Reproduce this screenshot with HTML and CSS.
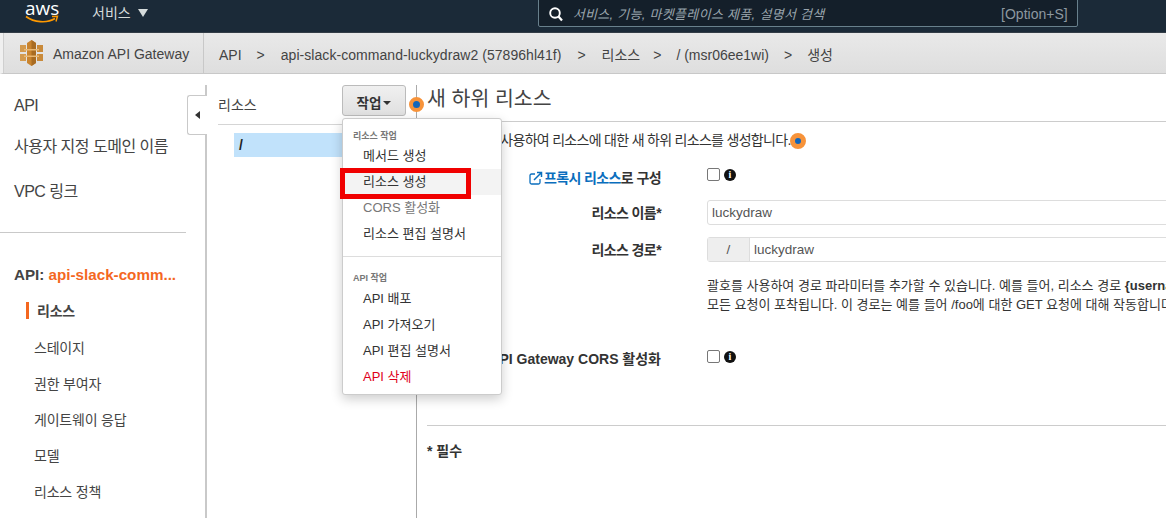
FILE: index.html
```html
<!DOCTYPE html>
<html lang="ko">
<head>
  <meta charset="UTF-8" />
  <title>Amazon API Gateway</title>
  <link rel="stylesheet" href="styles.css">
</head>
<body>

  <div class="topnav">
    <div class="aws-logo">
      <span class="aws-word">aws</span>
      <svg class="aws-smile" width="34" height="10" viewBox="0 0 34 10">
        <path d="M1 1.5C9 7.5 22 8.5 30 3.5" fill="none" stroke="#f90" stroke-width="1.6"/>
        <path d="M27 1.5L32.5 1.2 31 6.5" fill="none" stroke="#f90" stroke-width="1.4"/>
      </svg>
    </div>
    <div class="services">서비스 <span class="services-caret"></span></div>
    <div class="search">
      <svg class="search-icon" width="16" height="16" viewBox="0 0 16 16">
        <circle cx="7" cy="7" r="4.8" fill="none" stroke="#fff" stroke-width="1.9"/>
        <path d="M10.5 10.5L14 14.5" stroke="#fff" stroke-width="2.2"/>
      </svg>
      <span class="search-text">서비스, 기능, 마켓플레이스 제품, 설명서 검색</span>
      <span class="search-key">[Option+S]</span>
    </div>
  </div>

  <div class="subnav">
    <div class="brand">
      <svg width="23" height="26" viewBox="0 0 23 26">
        <rect x="0" y="5" width="6" height="7" fill="#d39a4e"/>
        <rect x="0" y="14" width="6" height="7" fill="#d39a4e"/>
        <rect x="17" y="5" width="6" height="7" fill="#c98a3a"/>
        <rect x="17" y="14" width="6" height="7" fill="#c98a3a"/>
        <path d="M7 3L11.500 0 16 3V23L11.500 26 7 23Z" fill="#c9842f"/>
        <path d="M11.500 0L16 3V23L11.500 26Z" fill="#a96c22"/>
        <rect x="4" y="9" width="15" height="1.500" fill="#eab873"/>
        <rect x="4" y="15.500" width="15" height="1.500" fill="#eab873"/>
      </svg>
      <span>Amazon API Gateway</span>
    </div>
    <div class="crumbs">
      <span>API</span><span class="sep">&gt;</span>
      <span class="crumb-long">api-slack-command-luckydraw2 (57896hl41f)</span><span class="sep">&gt;</span>
      <span class="crumb-res">리소스</span><span class="sep">&gt;</span>
      <span>/ (msr06ee1wi)</span><span class="sep">&gt;</span>
      <span>생성</span>
    </div>
  </div>

  <div class="content">
    <div class="sidebar">
      <a class="side-top">API</a>
      <a class="side-top">사용자 지정 도메인 이름</a>
      <a class="side-top">VPC 링크</a>
      <hr class="side-rule">
      <div class="side-api"><b>API:</b> <span class="side-api-name">api-slack-comm...</span></div>
      <a class="side-sub active">리소스</a>
      <a class="side-sub">스테이지</a>
      <a class="side-sub">권한 부여자</a>
      <a class="side-sub">게이트웨이 응답</a>
      <a class="side-sub">모델</a>
      <a class="side-sub">리소스 정책</a>
      <div class="collapse-tab"><span class="collapse-arrow"></span></div>
    </div>

    <div class="tree">
      <div class="tree-head">
        <span>리소스</span>
        <button class="action-btn">작업<span class="btn-caret"></span></button>
      </div>
      <div class="tree-row">/</div>
      <span class="dot dot-head"></span>

      <div class="menu">
        <div class="menu-title">리소스 작업</div>
        <div class="menu-item">메서드 생성</div>
        <div class="menu-item hover">리소스 생성<span class="redbox"></span></div>
        <div class="menu-item muted">CORS 활성화</div>
        <div class="menu-item">리소스 편집 설명서</div>
        <div class="menu-rule"></div>
        <div class="menu-title">API 작업</div>
        <div class="menu-item">API 배포</div>
        <div class="menu-item">API 가져오기</div>
        <div class="menu-item">API 편집 설명서</div>
        <div class="menu-item danger">API 삭제</div>
      </div>
    </div>

    <div class="main">
      <h1 class="main-title">새 하위 리소스</h1>
      <p class="intro">이 페이지를 사용하여 리소스에 대한 새 하위 리소스를 생성합니다.<span class="dot dot-inline"></span></p>

      <div class="form">
        <div class="form-label row-proxy"><svg class="ext-icon" width="14" height="14" viewBox="0 0 14 14">
          <path d="M6 3H2.5A1.5 1.5 0 0 0 1 4.500V11.500A1.500 1.500 0 0 0 2.500 13H9.500A1.500 1.500 0 0 0 11 11.500V8" fill="none" stroke="#0a6ebd" stroke-width="1.300"/>
          <path d="M5 9L12 2M8 1.500H12.500V6" fill="none" stroke="#0a6ebd" stroke-width="1.500"/>
        </svg><span class="link">프록시 리소스</span>로 구성</div>
        <div class="form-field check-field row-proxy"><span class="checkbox"></span><span class="info">i</span></div>

        <div class="form-label row-name">리소스 이름*</div>
        <div class="form-field row-name"><div class="input">luckydraw</div></div>

        <div class="form-label row-path">리소스 경로*</div>
        <div class="form-field row-path"><div class="input path"><span class="path-prefix">/</span><span class="path-value">luckydraw</span></div></div>

        <div class="form-label row-help"></div>
        <div class="help">괄호를 사용하여 경로 파라미터를 추가할 수 있습니다. 예를 들어, 리소스 경로 <b>{username}</b>은(는) 'username'이라는 경로 파라미터를 나타냅니다.<br>모든 요청이 포착됩니다. 이 경로는 예를 들어 /foo에 대한 GET 요청에 대해 작동합니다.</div>

        <div class="form-label cors-label">API Gateway CORS 활성화</div>
        <div class="form-field check-field cors-field"><span class="checkbox"></span><span class="info">i</span></div>
      </div>

      <div class="required"><b>* 필수</b></div>
    </div>
  </div>

</body>
</html>
```

FILE: styles.css
```css
html, body {
  margin: 0;
  height: 518px;
  overflow: hidden;
}
body {
  font-family: "Liberation Sans", "Noto Sans CJK KR", sans-serif;
  font-size: 14px;
  color: #333;
  background: #fff;
}

/* top nav */
.topnav {
  height: 33px;
  background: #1b2a38;
  display: flex;
  align-items: flex-start;
  border-bottom: 1px solid #333d47;
  box-sizing: border-box;
  color: #d5dbdb;
}
.aws-logo {
  width: 92px;
  height: 33px;
  box-sizing: border-box;
  padding-left: 25px;
  position: relative;
}
.aws-word {
  display: block;
  font-family: "Open Sans", sans-serif;
  font-size: 19px;
  line-height: 16px;
  color: #fff;
}
.aws-smile {
  position: absolute;
  left: 25px;
  top: 15px;
}
.services {
  font-size: 14px;
  line-height: 26px;
  display: flex;
  align-items: center;
  gap: 7px;
}
.services-caret {
  border-left: 5.500px solid transparent;
  border-right: 5.500px solid transparent;
  border-top: 8px solid #d5dbdb;
}
.search {
  margin-left: 390px;
  margin-top: -6px;
  width: 540px;
  height: 33px;
  box-sizing: border-box;
  border: 1px solid #68808c;
  border-radius: 2px;
  background: #141f2a;
  display: flex;
  align-items: center;
  padding: 6px 9px 0 9px;
}
.search-text {
  margin-left: 9px;
  font-style: italic;
  font-size: 13px;
  letter-spacing: 0.3px;
  color: #9aa5ad;
  flex: 1;
}
.search-key {
  font-size: 14px;
  color: #8d98a0;
}

/* breadcrumb bar */
.subnav {
  height: 41px;
  box-sizing: border-box;
  display: flex;
  align-items: center;
  background: linear-gradient(#e9e9e9, #dedede);
  border-bottom: 1px solid #c8c8c8;
  border-left: 3px solid #f0f0f0;
  font-size: 14px;
  color: #444;
}
.brand {
  width: 201px;
  height: 100%;
  box-sizing: border-box;
  padding-left: 16px;
  border-left: 1px solid #cfcfcf;
  border-right: 1px solid #c8c8c8;
  display: flex;
  align-items: center;
  gap: 10px;
}
.brand span {
  padding-top: 2px;
}
.crumbs {
  padding: 3px 0 0 15px;
  display: flex;
  gap: 4px;
  line-height: 16px;
  white-space: nowrap;
}
.crumb-long {
  margin: 0 1px;
  letter-spacing: 0.05px;
}
.crumb-res {
  margin: 0 -2px 0 1px;
}
.sep {
  margin: 0 11px;
}

/* columns */
.content {
  display: flex;
  height: 444px;
}
.sidebar {
  width: 207px;
  box-sizing: border-box;
  position: relative;
  padding-top: 21px;
  flex-shrink: 0;
}
.sidebar::after {
  content: "";
  position: absolute;
  right: 0;
  top: 11px;
  bottom: 0;
  border-right: 2px solid #c9c9c9;
}
.side-top {
  display: block;
  font-size: 16px;
  line-height: 22px;
  padding-left: 14px;
  margin-bottom: 19px;
  letter-spacing: -0.5px;
  color: #444;
}
.side-top:nth-child(2) {
  margin-bottom: 23px;
}
.side-top:nth-child(3) {
  margin-bottom: 29px;
}
.side-rule {
  border: 0;
  border-top: 1px solid #c9c9c9;
  margin: 0 21px 0 0;
}
.side-api {
  margin-top: 33px;
  padding-left: 14px;
  font-size: 15.200px;
  line-height: 18px;
  font-weight: bold;
  color: #444;
}
.side-api-name {
  color: #f4671f;
}
.side-sub {
  display: block;
  margin-left: 34px;
  font-size: 14px;
  line-height: 18px;
  margin-top: 18px;
  letter-spacing: -0.2px;
  color: #444;
}
.side-sub.active {
  font-weight: bold;
  position: relative;
  margin-left: 37px;
  margin-bottom: 19px;
}
.side-sub.active::before {
  content: "";
  position: absolute;
  left: -11px;
  top: 0;
  width: 3px;
  height: 17px;
  background: #f4671f;
}
.collapse-tab {
  position: absolute;
  right: 0;
  top: 21px;
  width: 20px;
  height: 40px;
  box-sizing: border-box;
  border: 1px solid #c9c9c9;
  border-right: 0;
  border-radius: 3px 0 0 3px;
  background: #fff;
  display: flex;
  align-items: center;
  justify-content: center;
  z-index: 1;
}
.collapse-arrow {
  border-top: 4px solid transparent;
  border-bottom: 4px solid transparent;
  border-right: 5px solid #333;
}

/* resource tree */
.tree {
  width: 210px;
  box-sizing: border-box;
  position: relative;
  flex-shrink: 0;
}
.tree::after {
  content: "";
  position: absolute;
  right: 0;
  top: 11px;
  bottom: 0;
  border-right: 1px solid #aaa;
}
.tree-head {
  height: 51px;
  box-sizing: border-box;
  margin-left: 11px;
  padding-top: 11px;
  border-bottom: 1px solid #d5d5d5;
  display: flex;
  justify-content: space-between;
  align-items: flex-start;
  padding-right: 11px;
}
.tree-head span:first-child {
  line-height: 18px;
  margin-top: 11px;
  color: #444;
}
.action-btn {
  width: 64px;
  height: 31px;
  font: bold 13.500px "Liberation Sans", "Noto Sans CJK KR", sans-serif;
  color: #333;
  background: linear-gradient(#f0f0f0, #e0e0e0);
  border: 1px solid #bbb;
  border-radius: 3px;
  padding: 0;
}
.btn-caret {
  display: inline-block;
  margin-left: 2px;
  vertical-align: 3px;
  border-left: 4px solid transparent;
  border-right: 4px solid transparent;
  border-top: 4px solid #333;
}
.tree-row {
  margin: 8px 0 0 27px;
  height: 24px;
  line-height: 24px;
  padding-left: 5px;
  background: #c1e2fb;
  font-weight: bold;
  color: #222;
}
.dot {
  position: absolute;
  width: 7px;
  height: 7px;
  border-radius: 50%;
  background: #1166bb;
  border: 4px solid #f7933a;
  box-sizing: content-box;
  z-index: 6;
}
.dot-head {
  left: 202px;
  top: 23px;
}
.menu {
  position: absolute;
  left: 135px;
  top: 44px;
  width: 160px;
  height: 277px;
  box-sizing: border-box;
  background: #fff;
  border: 1px solid #ccc;
  border-radius: 3px;
  box-shadow: 0 4px 12px rgba(0, 0, 0, 0.2);
  padding-top: 10px;
  z-index: 5;
}
.menu-title {
  font-size: 9px;
  font-weight: bold;
  line-height: 14px;
  color: #777;
  padding-left: 10px;
}
.menu-rule + .menu-title {
  margin-bottom: 1px;
}
.menu-item {
  height: 26px;
  line-height: 26px;
  padding-left: 20px;
  font-size: 13px;
  color: #333;
  position: relative;
}
.menu-item.hover {
  background: #f3f3f3;
}
.menu-item.muted {
  color: #777;
}
.menu-item.danger {
  color: #e0001b;
}
.menu-rule {
  border-top: 1px solid #ddd;
  margin: 9px 0 14px;
}
.redbox {
  position: absolute;
  left: -3px;
  top: -1px;
  width: 131px;
  height: 31px;
  box-sizing: border-box;
  border: 5px solid #f00000;
}

/* main form */
.main {
  flex: 1;
  min-width: 0;
  padding-left: 10px;
  white-space: nowrap;
  overflow: hidden;
}
.main-title {
  font-size: 20.500px;
  font-weight: normal;
  line-height: 50px;
  margin: 0;
  height: 47px;
  color: #444;
  border-bottom: 1px solid #ccc;
}
.intro {
  margin: 8px 0 0;
  padding-left: 6px;
  font-size: 14px;
  line-height: 20px;
  letter-spacing: -0.7px;
  position: relative;
}
.dot-inline {
  position: static;
  display: inline-block;
  vertical-align: middle;
  width: 6px;
  height: 6px;
  border-width: 5px;
  margin-left: -1px;
}
.form {
  display: grid;
  grid-template-columns: 234px 1fr;
  column-gap: 46px;
  margin-top: 14px;
}
.form-label {
  text-align: right;
  font-weight: bold;
  font-size: 14px;
  line-height: 20px;
  padding-top: 4px;
  letter-spacing: -0.6px;
  box-sizing: border-box;
}
.row-proxy {
  height: 35px;
}
.row-name {
  height: 37px;
}
.row-path {
  height: 41px;
}
.row-help {
  height: 68px;
}
.link {
  color: #0a6ebd;
}
.ext-icon {
  vertical-align: -2px;
  margin-right: 1px;
}
.check-field {
  display: flex;
  gap: 4px;
  padding-top: 4px;
  box-sizing: border-box;
}
.cors-field {
  padding-top: 5px;
}
.checkbox {
  width: 11px;
  height: 11px;
  border: 1px solid #777;
  border-radius: 2px;
  background: #fff;
}
.info {
  width: 12px;
  height: 12px;
  margin-top: 1px;
  border-radius: 50%;
  background: #111;
  color: #fff;
  font: bold 10px/12px "Liberation Serif", serif;
  text-align: center;
}
.input {
  height: 25px;
  line-height: 23px;
  box-sizing: border-box;
  border: 1px solid #ddd;
  border-radius: 3px;
  padding-left: 4px;
  margin-top: 1px;
  font-size: 13.500px;
  color: #555;
  width: 700px;
}
.path {
  display: flex;
  padding-left: 0;
}
.path-prefix {
  width: 41px;
  text-align: center;
  background: #eee;
  border-right: 1px solid #ddd;
}
.path-value {
  padding-left: 4px;
}
.help {
  font-size: 13px;
  line-height: 18.500px;
  height: 68px;
  color: #333;
}
.cors-label {
  height: 34px;
  letter-spacing: 0;
}
.required {
  margin-top: 46px;
  padding-top: 15px;
  border-top: 1px solid #ccc;
  line-height: 20px;
}
```
